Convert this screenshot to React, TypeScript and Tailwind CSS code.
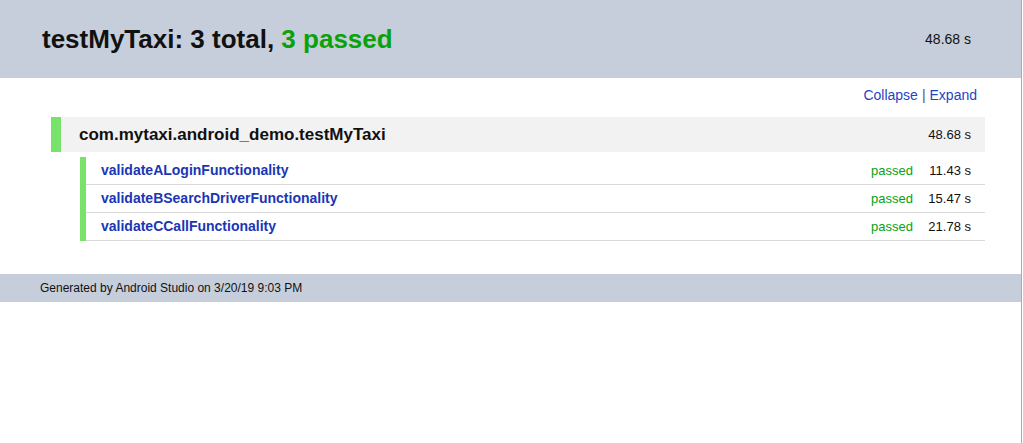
const tests = [
  { name: 'validateALoginFunctionality', status: 'passed', time: '11.43 s' },
  { name: 'validateBSearchDriverFunctionality', status: 'passed', time: '15.47 s' },
  { name: 'validateCCallFunctionality', status: 'passed', time: '21.78 s' },
]

export default function App() {
  return (
    <div className="min-h-screen bg-white font-['Liberation_Sans',Arial,sans-serif] text-[#111]">
      <div className="w-[1022px] min-h-[443px] border-r border-[#a9a9a9]">
        <header className="h-[78px] bg-[#c7cedb] flex items-center justify-between pl-[42px] pr-[50px]">
          <h1 className="text-[26px] font-bold leading-none">
            testMyTaxi: 3 total, <span className="text-[#0aa20a]">3 passed</span>
          </h1>
          <span className="text-[14px]">48.68 s</span>
        </header>

        <div className="flex justify-end pr-[44px] pt-[7px] h-[39px] text-[14px]">
          <a className="text-[#1f45c4]" href="#">Collapse</a>
          <span className="px-[4px] text-[#555]">|</span>
          <a className="text-[#1f45c4]" href="#">Expand</a>
        </div>

        <div className="ml-[51px] mr-[36px]">
          <div className="flex h-[35px] bg-[#f2f2f2]">
            <div className="w-[10px] bg-[#77e36b]" />
            <div className="flex-1 flex items-center justify-between pl-[18px] pr-[14px]">
              <span className="text-[17px] font-bold">com.mytaxi.android_demo.testMyTaxi</span>
              <span className="text-[13px]">48.68 s</span>
            </div>
          </div>

          <div className="flex ml-[29px] mt-[5px]">
            <div className="w-[6px] bg-[#77e36b]" />
            <div className="flex-1">
              {tests.map(t => (
                <div key={t.name} className="flex items-center h-[28px] border-b border-[#d9d9d9] pl-[15px] pr-[14px] text-[13px]">
                  <span className="flex-1 font-bold text-[14px] text-[#1a36b4]">{t.name}</span>
                  <span className="text-[#0aa20a]">{t.status}</span>
                  <span className="w-[58px] text-right">{t.time}</span>
                </div>
              ))}
            </div>
          </div>
        </div>

        <footer className="mt-[33px] h-[28px] bg-[#c7cedb] flex items-center pl-[40px] text-[12px]">
          Generated by Android Studio on 3/20/19 9:03 PM
        </footer>
      </div>
    </div>
  )
}
